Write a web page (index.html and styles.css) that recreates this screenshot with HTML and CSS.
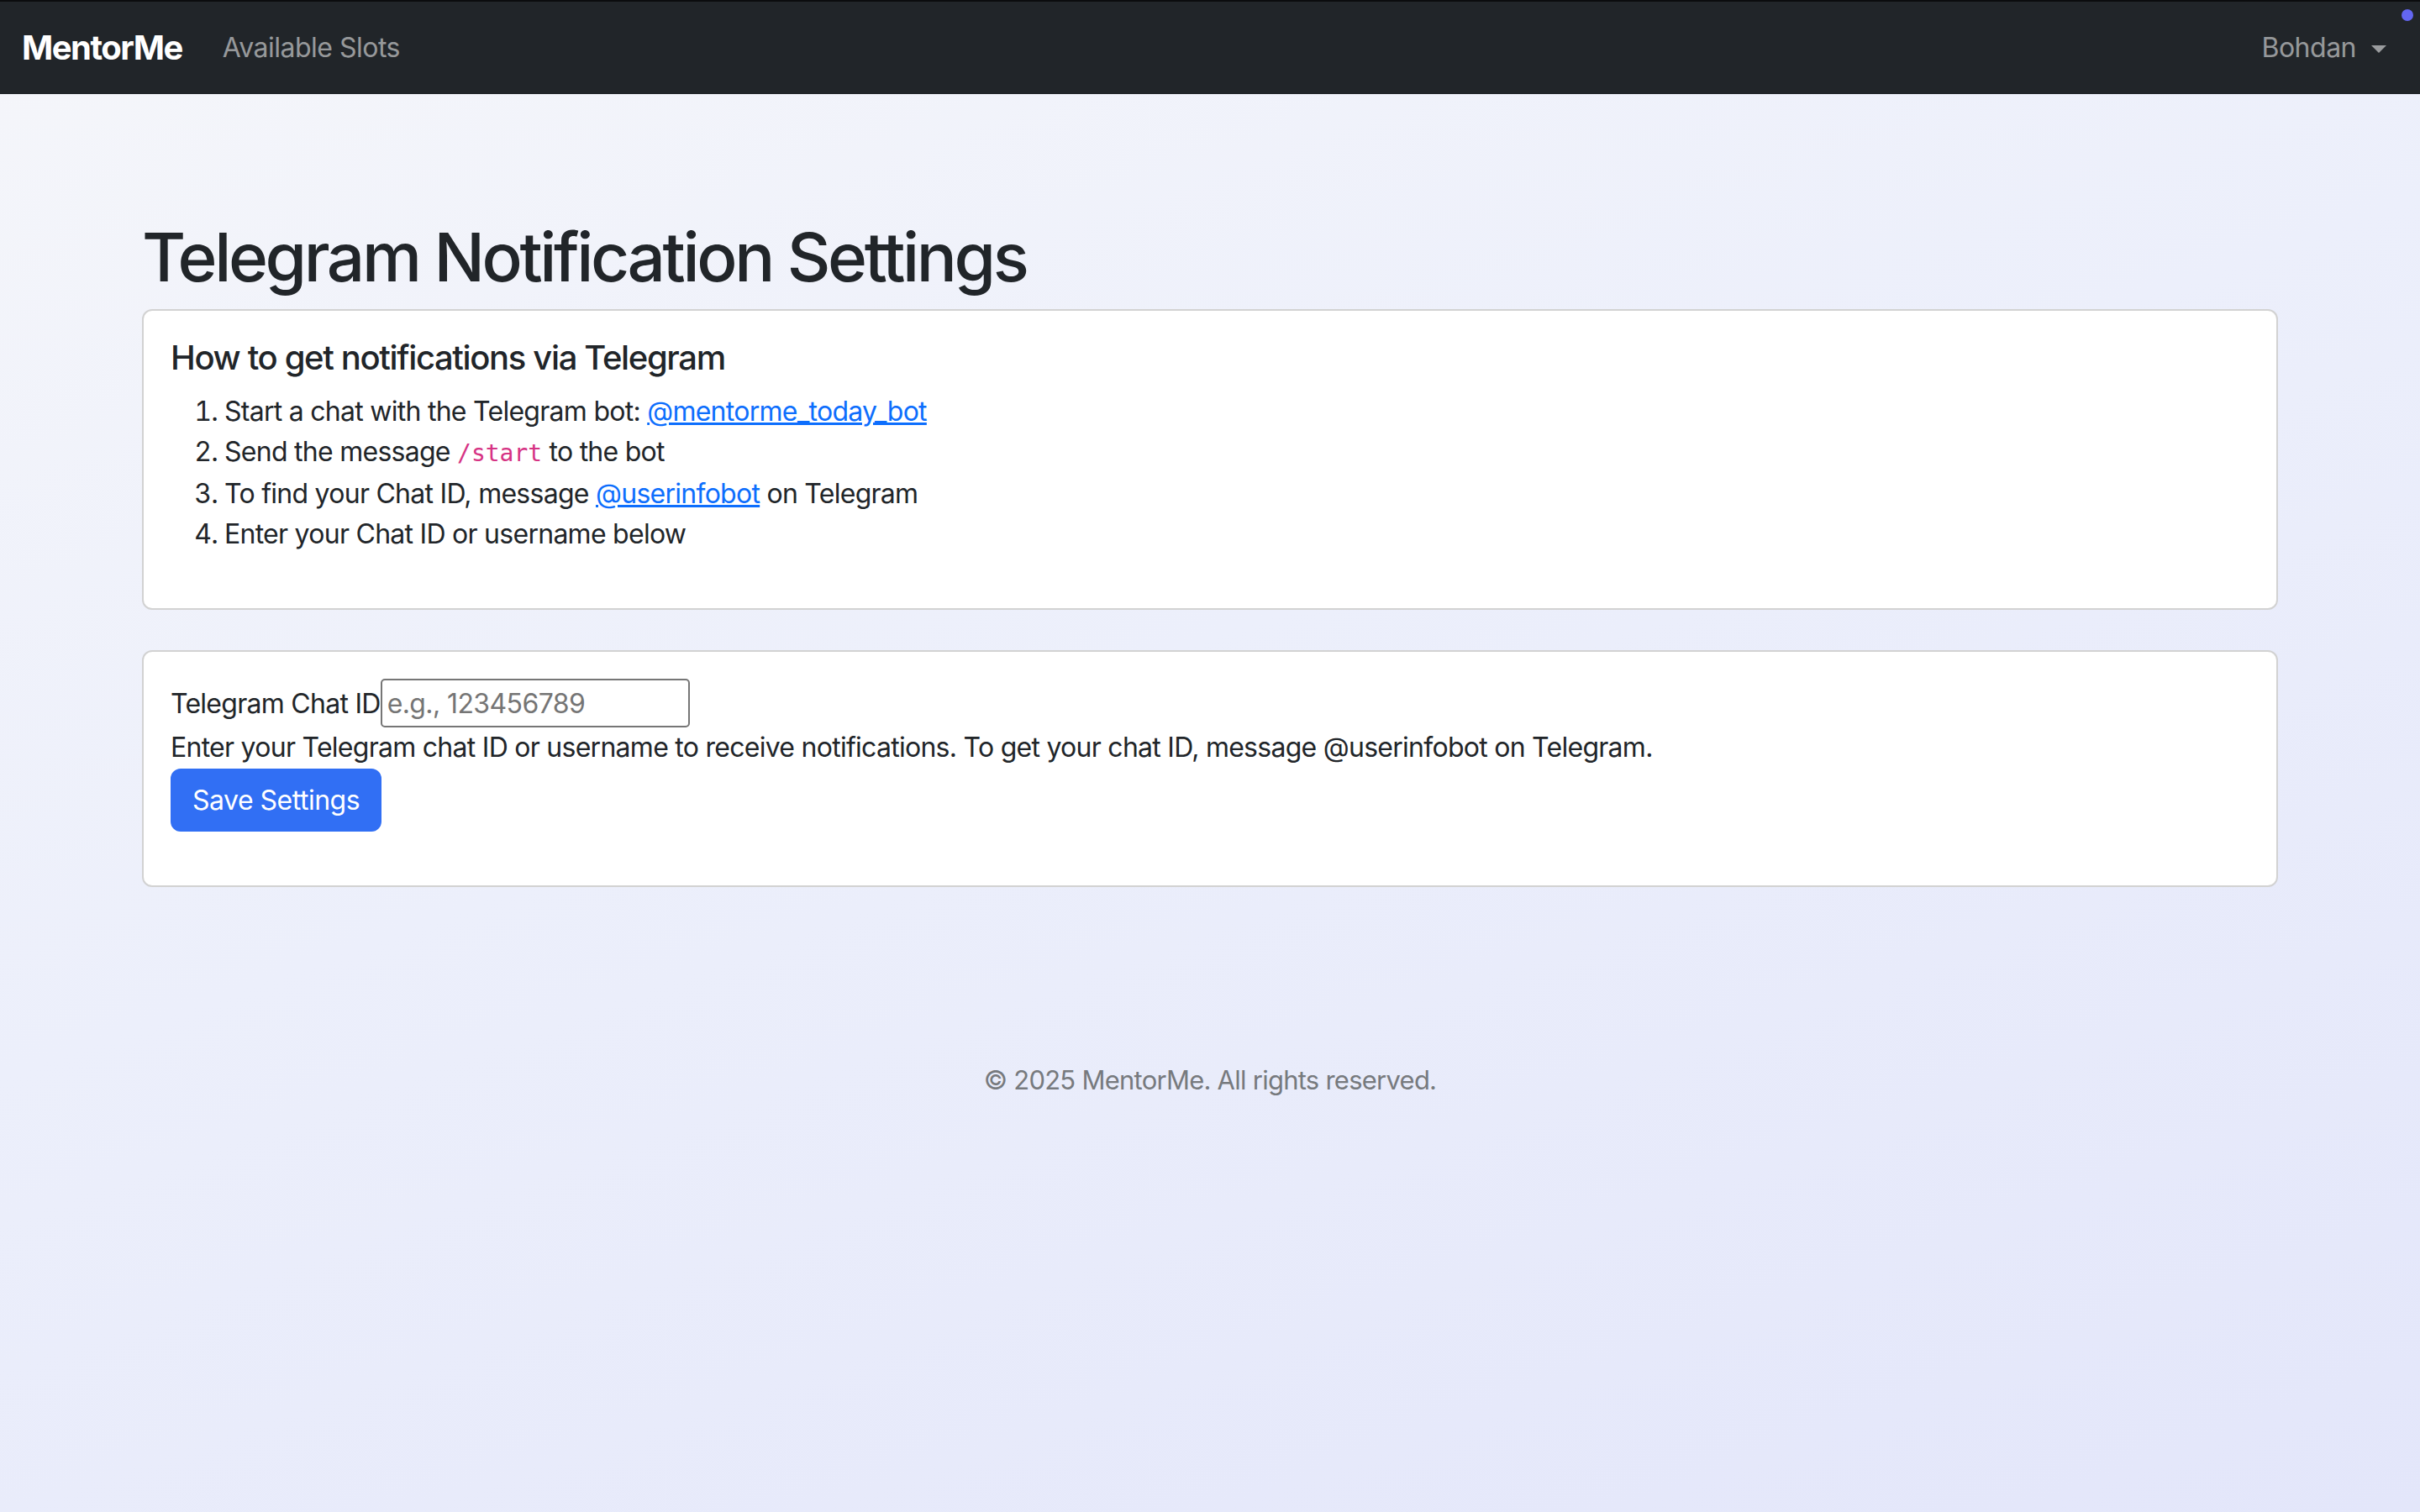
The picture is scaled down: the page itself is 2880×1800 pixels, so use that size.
FILE: index.html
```html
<!DOCTYPE html>
<html lang="en">
<head>
<meta charset="utf-8">
<title>Telegram Notification Settings - MentorMe</title>
<link rel="stylesheet" href="styles.css">
</head>
<body>
<nav class="navbar">
  <div class="nav-left">
    <a class="brand" href="#">MentorMe</a>
    <a class="nav-link" href="#">Available Slots</a>
  </div>
  <div class="nav-right">
    <a class="nav-link dropdown" href="#">Bohdan<span class="caret"></span></a>
  </div>
  <span class="dot"></span>
</nav>

<main class="container">
  <h1 class="page-title">Telegram Notification Settings</h1>

  <section class="card card-info">
    <div class="card-body">
      <h5 class="card-title">How to get notifications via Telegram</h5>
      <ol class="steps">
        <li>Start a chat with the Telegram bot: <a href="#">@mentorme_today_bot</a></li>
        <li>Send the message <code>/start</code> to the bot</li>
        <li>To find your Chat ID, message <a href="#">@userinfobot</a> on Telegram</li>
        <li>Enter your Chat ID or username below</li>
      </ol>
    </div>
  </section>

  <section class="card">
    <div class="card-body">
      <form class="settings-form">
        <p class="field"><label for="chat">Telegram Chat ID</label><input id="chat" type="text" placeholder="e.g., 123456789"></p>
        <div class="help">Enter your Telegram chat ID or username to receive notifications. To get your chat ID, message @userinfobot on Telegram.</div>
        <button type="button" class="btn">Save Settings</button>
      </form>
    </div>
  </section>
</main>

<footer class="footer">© 2025 MentorMe. All rights reserved.</footer>
</body>
</html>
```

FILE: styles.css
```css
* { box-sizing: border-box; }

html, body {
  margin: 0;
  min-height: 100%;
}

body {
  min-height: 1800px;
  font-family: Inter, "Noto Sans", "Liberation Sans", sans-serif;
  font-size: 32px;
  line-height: 48px;
  color: #212529;
  background: linear-gradient(160deg, #f5f6fa 0%, #eceffb 45%, #e3e6fa 100%);
  letter-spacing: -0.73px;
}

a { color: #0d6efd; }

.navbar {
  position: relative;
  height: 112px;
  background: #212529;
  border-top: 2px solid #0b0c0e;
  display: flex;
  align-items: center;
  justify-content: space-between;
  padding: 0 24px 0 26px;
}

.nav-left, .nav-right {
  display: flex;
  align-items: center;
}

.brand {
  color: #fff;
  font-size: 40px;
  font-weight: 700;
  text-decoration: none;
  margin-right: 32px;
  letter-spacing: -1.5px;
}

.nav-link {
  color: rgba(255, 255, 255, 0.55);
  text-decoration: none;
  padding: 0 16px;
  font-size: 32px;
  letter-spacing: -0.5px;
}

.dropdown {
  display: flex;
  align-items: center;
}

.caret {
  display: inline-block;
  margin-left: 18px;
  width: 0;
  height: 0;
  border-top: 9px solid rgba(255, 255, 255, 0.55);
  border-left: 9px solid transparent;
  border-right: 9px solid transparent;
  margin-top: 2px;
}

.dot {
  position: absolute;
  top: 9px;
  right: 8px;
  width: 14px;
  height: 14px;
  border-radius: 50%;
  background: #6366f1;
}

.container {
  max-width: 2590px;
  margin: 0 auto;
  padding: 0 24px;
  padding-top: 146px;
}

.page-title {
  margin: 0 0 14px;
  font-size: 80px;
  line-height: 96px;
  font-weight: 500;
  letter-spacing: -3.4px;
}

.card {
  background: #fff;
  border: 2px solid rgba(0, 0, 0, 0.175);
  border-radius: 12px;
}

.card-info {
  margin-bottom: 48px;
}

.card-body {
  padding: 32px;
}

.card-title {
  margin: 0 0 16px;
  font-size: 40px;
  line-height: 48px;
  font-weight: 500;
  letter-spacing: -1.36px;
}

.steps {
  margin: 0 0 32px;
  padding-left: 64px;
}

code {
  font-family: "DejaVu Sans Mono", "Liberation Mono", monospace;
  font-size: 28px;
  color: #d63384;
  letter-spacing: 0;
}

.settings-form {
  margin: 0 0 32px;
}

.field {
  margin: 0;
}

.field input {
  font-family: inherit;
  font-size: 32px;
  letter-spacing: -0.6px;
  height: 58px;
  width: 368px;
  padding: 0 6px;
  border: 2px solid #767676;
  border-radius: 5px;
  color: #212529;
  background: #fff;
  vertical-align: baseline;
}

.field input::placeholder {
  color: #757575;
}

.help {
  margin: 0;
}

.btn {
  display: inline-block;
  margin-top: 1px;
  font-family: inherit;
  font-size: 32px;
  line-height: 48px;
  letter-spacing: -0.5px;
  color: #fff;
  background: #316ff4;
  border: 2px solid #316ff4;
  border-radius: 12px;
  padding: 12px 24px 11px;
  cursor: pointer;
}

.footer {
  margin-top: 206px;
  text-align: center;
  color: #777a7e;
  font-size: 31px;
  letter-spacing: -0.75px;
}
```
